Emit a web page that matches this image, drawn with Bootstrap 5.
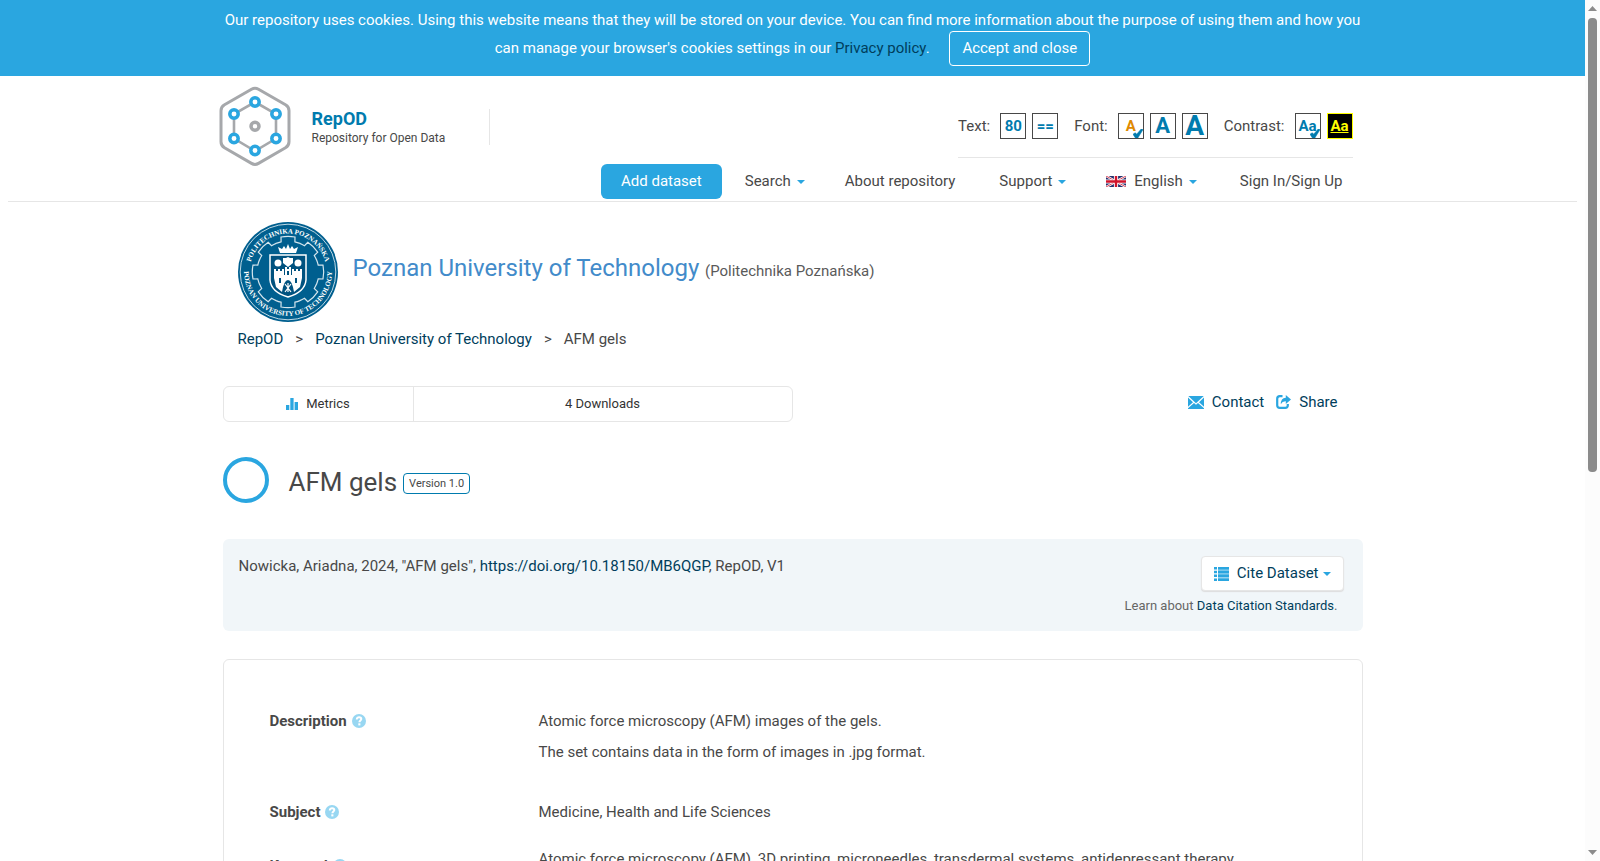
<!DOCTYPE html>
<html lang="en">
<head>
<meta charset="utf-8">
<meta name="viewport" content="width=device-width, initial-scale=1">
<title>AFM gels - RepOD</title>
<link rel="stylesheet" href="https://cdn.jsdelivr.net/npm/bootstrap@5.3.0/dist/css/bootstrap.min.css">
<style>
  :root { --sky: #2aa6e0; --navy: #003e5c; --ocean: #007bae; --ink: #484848; --rule: #e6e6e6; }
  body { font-family: Roboto, "Liberation Sans", sans-serif; font-size: 15px; line-height: 20px; color: var(--ink); background: #fff; }
  a { color: var(--navy); text-decoration: none; }
  svg { flex-shrink: 0; }
  .scroller { min-width: 0; }
  .scroller::-webkit-scrollbar { display: none; }
  .page-width { max-width: 1170px; padding: 0 15px; }
  .btn { --bs-btn-font-size: 15px; --bs-btn-padding-y: 6px; --bs-btn-padding-x: 12px; --bs-btn-line-height: 21px; --bs-btn-border-radius: 4px; }

  .cookie-bar { background: var(--sky); color: #fff; line-height: 28px; padding: 6px 0 14px; }
  .cookie-bar .btn { --bs-btn-border-color: #fff; --bs-btn-color: #fff; margin: -4px 0 -4px 16px; vertical-align: baseline; }

  .site-head { border-bottom: 1px solid var(--rule); margin: 0 8px; padding-bottom: 2px; }
  .brand { margin: 10px 0 0 -4px; }
  .brand-text { margin-left: 21px; padding-top: 3px; }
  .brand-name { font-size: 18px; font-weight: 700; color: var(--ocean); }
  .brand-sub { font-size: 12px; line-height: 18px; }
  .brand-rule { border-left: 1px solid var(--rule); height: 36px; margin-left: 44px; }
  .tools { border-bottom: 1px solid var(--rule); margin: 37px 10px 6px 0; padding-bottom: 18px; gap: 6px; }
  .tools .tool-label { margin-right: 4px; }
  .tools .tool + .tool-label { margin-left: 10px; }
  .tool { width: 26px; height: 26px; padding: 0; border: 1px solid var(--ink); background: #fff; color: var(--ocean); font-weight: 700; line-height: 24px; position: relative; text-align: center; }
  .tool svg { position: absolute; right: 0; bottom: 0; }
  .tool-small { color: #e08a00; }
  .tool-mid { font-size: 22px; }
  .tool-big { font-size: 28px; }
  .tool-dark { background: #000; border-color: #ff0; color: #ff0; text-decoration: underline; }
  .main-nav { line-height: 23px; margin-right: 20px; column-gap: 40px; }
  .main-nav .nav-link { padding: 0; color: var(--ink); }
  .main-nav .btn-add { background: var(--sky); color: #fff; border-radius: 6px; padding: 6px 20px; margin-right: -17px; }
  .main-nav .nav-plain { margin-right: 4px; }
  .main-nav .nav-lang { margin-right: 3px; }
  .caret { display: inline-block; border: 4px solid transparent; border-top-color: var(--sky); border-bottom: 0; margin-left: 6px; vertical-align: 2px; }

  .dv-head { padding: 20px 0 0 15px; gap: 15px; }
  .dv-names { padding-bottom: 8px; }
  .dv-title { font-size: 24px; line-height: 32px; color: #428bca; }
  .dv-native { margin-left: 2px; color: #5a5a5a; }
  .seal-text { font: bold 7px "Liberation Serif", serif; fill: #fff; }
  .crumbs { --bs-breadcrumb-divider: ">"; margin: 7px 0 37px 15px; }
  .crumbs .breadcrumb-item + .breadcrumb-item { padding-left: 12px; }
  .crumbs .breadcrumb-item + .breadcrumb-item::before { padding-right: 12px; color: var(--ink); }
  .crumbs .active { color: var(--ink); }
  .metrics { border: 1px solid var(--rule); border-radius: 6px; font-size: 13px; line-height: 34px; color: #333; width: 50%; }
  .metrics-name { border-right: 1px solid var(--rule); width: 190px; }
  .ds-actions { padding: 6px 25px 0 0; gap: 12px; }
  .ds-actions a { gap: 8px; }
  .ds-head { padding: 35px 0 36px; }
  .ds-ring { width: 46px; height: 46px; border: 4px solid var(--sky); border-radius: 50%; margin-right: 20px; }
  .ds-title { font-size: 26px; line-height: 34px; padding-top: 4px; }
  .version { border: 1px solid var(--ocean); border-radius: 4px; font-size: 11px; line-height: 19px; padding: 0 5px; margin: 7px 0 0 6px; }
  .citation { background: #f1f6f9; border-radius: 6px; padding: 17px 19px 15px 16px; margin-bottom: 28px; }
  .btn-cite { --bs-btn-bg: #fff; --bs-btn-color: var(--navy); --bs-btn-border-color: #e6e6e6; box-shadow: 0 1px 1px #ddd; }
  .btn-cite .caret { margin-left: 4px; }
  .learn { font-size: 13px; color: #666; padding: 5px 6px 0 0; }
  .panel { border: 1px solid var(--rule); border-radius: 6px; padding: 51px 46px 40px; }
  .field-label { width: 269px; gap: 5px; }
  .field-text p { margin: 0 0 11px; }
  .row-desc { margin-bottom: 29px; }
  .row-subject { margin-bottom: 27px; }
  .row-keyword .field-label { padding-top: 7px; }

  .scroll-rail { width: 15px; background: #fcfcfc; padding: 6px 0; }
  .scroll-thumb { width: 9px; height: 454px; border-radius: 4px; background: #8b8b8b; margin-top: 7px; }
</style>
</head>
<body class="d-flex vh-100">
<svg width="0" height="0" class="position-absolute" aria-hidden="true">
  <symbol id="check" viewBox="0 0 10 9"><path d="M0 5.300 2.300 3.800l1.400 1.400L8.200 0 10 .6 4.800 9H2.500z" fill="#007bae" stroke="#007bae" stroke-width=".6"/></symbol>
  <symbol id="help" viewBox="0 0 14 14"><circle cx="7" cy="7" r="7" fill="#98d7f2"/><path d="M4.800 5.400C4.800 3.900 5.800 3.300 7.100 3.300s2.200.7 2.200 1.800c0 1.400-1.900 1.500-1.900 3.200" fill="none" stroke="#fff" stroke-width="2"/><rect x="6.300" y="9.300" width="2.100" height="2.100" fill="#fff"/></symbol>
  <symbol id="tooth" viewBox="-50 -50 100 100" overflow="visible"><path d="M-11.900-28.600A31 31 0 0 1-6.900-30.200L-7-35A35.700 35.700 0 0 1 7-35L6.900-30.200A31 31 0 0 1 11.900-28.600" fill="none" stroke="#d5e6ee" stroke-width="1.200"/></symbol>
</svg>

<div class="scroller flex-grow-1 overflow-auto">
  <div class="cookie-bar text-center">
    <div class="container page-width">Our repository uses cookies. Using this website means that they will be stored on your device. You can find more information about the purpose of using them and how you can manage your browser's cookies settings in our <a href="#">Privacy policy</a>. <button type="button" class="btn">Accept and close</button></div>
  </div>

  <header class="site-head">
    <div class="container page-width d-flex justify-content-between">
      <a href="#" class="brand d-flex align-items-center align-self-start text-reset">
        <svg width="72" height="81" viewBox="0 0 72 81" fill="none" aria-hidden="true">
          <path d="M32.500 3.200q3.500-2 7 0l27 15.600q3.500 2 3.500 6v31q0 4-3.500 6l-27 15.600q-3.500 2-7 0l-27-15.600q-3.500-2-3.500-6v-31q0-4 3.500-6z" stroke="#a6a8ab" stroke-width="3"/>
          <path d="M36 16 57 28v24.500L36 65 15 52.500V28z" stroke="#a6a8ab" stroke-width="2.600"/>
          <g fill="#fff" stroke="#2aa6e0" stroke-width="3.500"><circle cx="36" cy="16" r="4.200"/><circle cx="57" cy="28" r="4.200"/><circle cx="57" cy="52.500" r="4.200"/><circle cx="36" cy="64.500" r="4.200"/><circle cx="15" cy="52.500" r="4.200"/><circle cx="15" cy="28" r="4.200"/></g>
          <circle cx="36" cy="40.300" r="4" fill="#fff" stroke="#a6a8ab" stroke-width="3.500"/>
        </svg>
        <span class="brand-text d-flex flex-column"><span class="brand-name">RepOD</span><span class="brand-sub">Repository for Open Data</span></span>
        <span class="brand-rule"></span>
      </a>
      <div class="d-flex flex-column align-items-end">
        <div class="tools d-flex align-items-center">
          <span class="tool-label">Text:</span>
          <button class="tool" type="button">80</button>
          <button class="tool" type="button">==</button>
          <span class="tool-label">Font:</span>
          <button class="tool tool-small" type="button">A<svg width="10" height="9"><use href="#check"/></svg></button>
          <button class="tool tool-mid" type="button">A</button>
          <button class="tool tool-big" type="button">A</button>
          <span class="tool-label">Contrast:</span>
          <button class="tool" type="button">Aa<svg width="10" height="9"><use href="#check"/></svg></button>
          <button class="tool tool-dark" type="button">Aa</button>
        </div>
        <nav class="main-nav nav align-items-center">
          <a class="nav-link btn-add" href="#">Add dataset</a>
          <a class="nav-link" href="#">Search<span class="caret"></span></a>
          <a class="nav-link nav-plain" href="#">About repository</a>
          <a class="nav-link" href="#">Support<span class="caret"></span></a>
          <a class="nav-link nav-lang d-flex align-items-center" href="#">
            <svg width="20" height="11" viewBox="0 0 20 11" aria-hidden="true"><rect width="20" height="11" fill="#26306e"/><path d="M0 0 20 11M20 0 0 11" stroke="#fff" stroke-width="2.400"/><path d="M0 0 20 11M20 0 0 11" stroke="#d0142c" stroke-width=".8"/><path d="M10 0v11M0 5.500h20" stroke="#fff" stroke-width="4.200"/><path d="M10 0v11M0 5.500h20" stroke="#d0142c" stroke-width="2.400"/></svg>
            <span class="ps-2">English<span class="caret"></span></span></a>
          <a class="nav-link" href="#">Sign In/Sign Up</a>
        </nav>
      </div>
    </div>
  </header>

  <main class="container page-width">
    <div class="dv-head d-flex align-items-center">
      <svg width="100" height="100" viewBox="-50 -50 100 100" role="img" aria-label="University seal">
        <circle r="50" fill="#005f8f"/>
        <circle r="47.800" fill="none" stroke="#d5e6ee" stroke-width=".9"/>
        <path id="arc-top" d="M-38.500 0A38.500 38.500 0 0 1 38.500 0" fill="none"/>
        <path id="arc-bottom" d="M-40.500-17A43.900 43.900 0 1 0 40.500-17" fill="none"/>
        <text class="seal-text" text-anchor="middle"><textPath href="#arc-top" startOffset="50%">POLITECHNIKA POZNAŃSKA</textPath></text>
        <text class="seal-text" text-anchor="middle"><textPath href="#arc-bottom" startOffset="50%">POZNAN UNIVERSITY OF TECHNOLOGY</textPath></text>
        <g id="teeth"><use href="#tooth" x="-50" y="-50" width="100" height="100"/><use href="#tooth" x="-50" y="-50" width="100" height="100" transform="rotate(45)"/><use href="#tooth" x="-50" y="-50" width="100" height="100" transform="rotate(90)"/><use href="#tooth" x="-50" y="-50" width="100" height="100" transform="rotate(135)"/></g>
        <use href="#teeth" transform="rotate(180)"/>
        <path d="M-18-17H18V8Q17 20 0 25Q-17 20-18 8Z" fill="#00527f" stroke="#fff" stroke-width="1.500"/>
        <path d="M-8-19-10-25l4 2 2-3 2 3 2-5 2 5 2-3 2 3 4-2-2 6z" fill="#fff"/>
        <path d="M-14 6V-3h2v2h2v-2h2v2h2v-2h2V3h1V-5h2v2h2v-2h2V3h1V-3h2v2h2v-2h2v2h2v-2h2V6l-2 9-6 5Q4 8 0 8T-6 20l-6-5z" fill="#fff"/>
        <circle cx="-10" cy="-9" r="3.500" fill="#fff"/><circle cx="10" cy="-9" r="3.500" fill="#fff"/>
        <path d="M-5-14h3l2-1 2 1h3v5L0-5-5-9z" fill="#fff"/>
        <path d="M-3 20 3 12M3 20-3 12M0 11v9" stroke="#fff" stroke-width="1.200"/>
        <path d="M-8 6v5M8 6v5M0-1v4" stroke="#00527f" stroke-width="2"/>
      </svg>
      <div class="dv-names"><a href="#" class="dv-title">Poznan University of Technology</a> <span class="dv-native">(Politechnika Poznańska)</span></div>
    </div>

    <nav aria-label="breadcrumb">
      <ol class="breadcrumb crumbs">
        <li class="breadcrumb-item"><a href="#">RepOD</a></li>
        <li class="breadcrumb-item"><a href="#">Poznan University of Technology</a></li>
        <li class="breadcrumb-item active" aria-current="page">AFM gels</li>
      </ol>
    </nav>

    <div class="d-flex justify-content-between align-items-start">
      <div class="metrics d-flex text-center">
        <div class="metrics-name"><svg class="me-2" width="12" height="13" viewBox="0 0 12 13" fill="#2aa6e0" aria-hidden="true"><path d="M0 7h3.300v5H0zM4.300 0h3.300v12H4.300zM8.600 4H12v8H8.600z"/></svg>Metrics</div>
        <div class="flex-grow-1">4 Downloads</div>
      </div>
      <div class="ds-actions d-flex">
        <a href="#" class="d-flex align-items-center"><svg width="16" height="13" viewBox="0 0 16 13" fill="#2aa6e0" aria-hidden="true"><path d="M.3 0h15.400L8 7.200zM0 1.500l5 4.700-5 4.600zM16 1.500l-5 4.700 5 4.600zM0 13v-.8l6-5.300 2 1.800 2-1.800 6 5.300v.8z"/></svg>Contact</a>
        <a href="#" class="d-flex align-items-center"><svg width="15" height="14" viewBox="0 0 15 14" aria-hidden="true"><path d="M6.500 1.200H3.800Q1.200 1.200 1.200 3.800v6.400q0 2.600 2.600 2.600h5.400q2.600 0 2.600-2.600V9" fill="none" stroke="#2aa6e0" stroke-width="2.200"/><path d="M9.800 0 15 4.500 9.800 9V6.300Q6.500 6 4.800 9.300 4.700 3 9.800 2.700z" fill="#2aa6e0"/></svg>Share</a>
      </div>
    </div>

    <div class="ds-head d-flex align-items-center">
      <span class="ds-ring"></span>
      <h1 class="ds-title fw-normal mb-0">AFM gels</h1>
      <span class="version">Version 1.0</span>
    </div>

    <section class="citation d-flex justify-content-between align-items-start">
      <div>Nowicka, Ariadna, 2024, "AFM gels", <a href="#">https://doi.org/10.18150/MB6QGP</a>, RepOD, V1</div>
      <div class="text-end">
        <button type="button" class="btn btn-cite d-inline-flex align-items-center"><svg class="me-2" width="15" height="14" viewBox="0 0 15 14" fill="#2aa6e0" aria-hidden="true"><path d="M4 0h11v14H4z" opacity=".5"/><path d="M0 0h3v2.500H0zM4 0h11v2.500H4zM0 3.800h3v2.500H0zM4 3.800h11v2.500H4zM0 7.600h3v2.500H0zM4 7.600h11v2.500H4zM0 11.500h3V14H0zM4 11.500h11V14H4z"/></svg>Cite Dataset<span class="caret"></span></button>
        <div class="learn">Learn about <a href="#">Data Citation Standards</a>.</div>
      </div>
    </section>

    <section class="panel">
      <dl class="mb-0">
        <div class="row-desc d-flex">
          <dt class="field-label d-flex align-items-center align-self-start">Description <svg width="14" height="14"><use href="#help"/></svg></dt>
          <dd class="field-text mb-0"><p>Atomic force microscopy (AFM) images of the gels.</p><p>The set contains data in the form of images in .jpg format.</p></dd>
        </div>
        <div class="row-subject d-flex">
          <dt class="field-label d-flex align-items-center">Subject <svg width="14" height="14"><use href="#help"/></svg></dt>
          <dd class="mb-0">Medicine, Health and Life Sciences</dd>
        </div>
        <div class="row-keyword d-flex">
          <dt class="field-label d-flex align-items-center">Keyword <svg width="14" height="14"><use href="#help"/></svg></dt>
          <dd class="mb-0">Atomic force microscopy (AFM), 3D printing, microneedles, transdermal systems, antidepressant therapy</dd>
        </div>
      </dl>
    </section>
  </main>
</div>

<div class="scroll-rail d-flex flex-column align-items-center flex-shrink-0" aria-hidden="true">
  <svg width="9" height="5" viewBox="0 0 9 5"><path d="M0 5 4.500 0 9 5z" fill="#8b8b8b"/></svg>
  <div class="scroll-thumb"></div>
  <svg class="mt-auto" width="9" height="5" viewBox="0 0 9 5"><path d="M0 0 4.500 5 9 0z" fill="#8b8b8b"/></svg>
</div>
<script src="https://cdn.jsdelivr.net/npm/bootstrap@5.3.0/dist/js/bootstrap.bundle.min.js"></script>
</body>
</html>
